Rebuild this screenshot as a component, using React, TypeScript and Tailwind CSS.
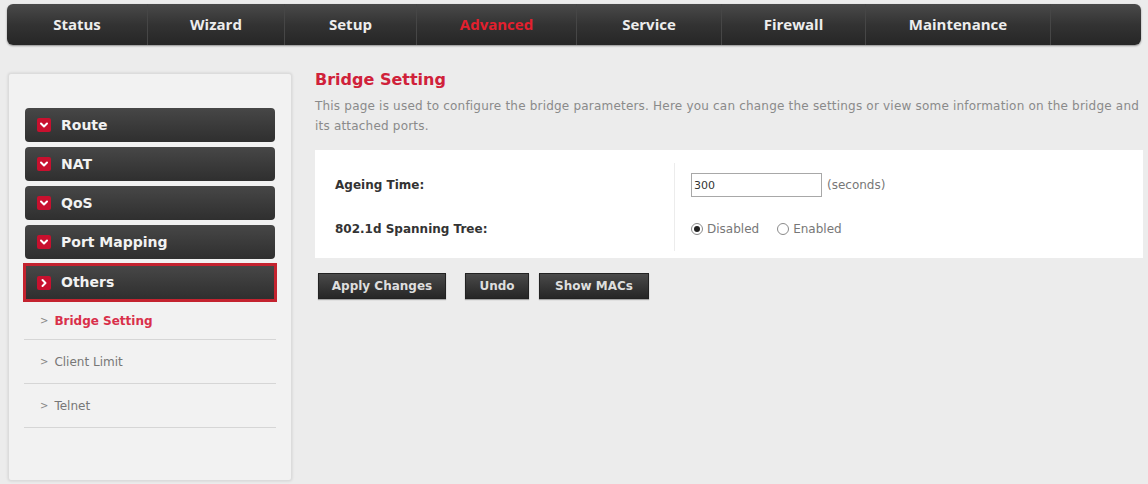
import { ChevronDown, ChevronRight } from "lucide-react";

const tabs = [
  { label: "Status", w: "w-[141px]" },
  { label: "Wizard", w: "w-[137px]" },
  { label: "Setup", w: "w-[132px]" },
  { label: "Advanced", w: "w-[160px]", active: true },
  { label: "Service", w: "w-[145px]" },
  { label: "Firewall", w: "w-[144px]" },
  { label: "Maintenance", w: "w-[185px]" },
];

const groups = ["Route", "NAT", "QoS", "Port Mapping"];
const subItems = [
  { label: "Bridge Setting", active: true },
  { label: "Client Limit" },
  { label: "Telnet" },
];

function TopNav() {
  return (
    <nav className="mx-[7px] mt-[4px] flex h-[41px] rounded-[6px] bg-gradient-to-b from-[#4a4a4a] via-[#333333] to-[#262626] shadow-[0_1px_2px_rgba(0,0,0,0.4)]">
      {tabs.map((t) => (
        <div
          key={t.label}
          className={`flex ${t.w} items-center justify-center border-r border-[#464646] font-['Open_Sans',sans-serif] text-[15px] font-bold ${
            t.active ? "text-[#e3202e]" : "text-[#ededed]"
          }`}
        >
          {t.label}
        </div>
      ))}
      <div className="flex-1" />
    </nav>
  );
}

function Sidebar() {
  return (
    <aside className="ml-[8px] flex w-[284px] flex-col rounded-[3px] border border-[#dcdcdc] bg-[#f2f2f2] px-[14px] pb-[52px] pt-[34px] shadow-[0_0_3px_rgba(0,0,0,0.12)]">
      <div className="flex flex-col gap-[5px] px-[2px]">
        {groups.map((g) => (
          <div
            key={g}
            className="flex h-[34px] items-center gap-[10px] rounded-[4px] bg-gradient-to-b from-[#474747] to-[#2f2f2f] pl-[12px] text-[14px] font-bold text-[#f2f2f2]"
          >
            <span className="flex h-[14px] w-[14px] items-center justify-center rounded-[2px] bg-[#c8102e]">
              <ChevronDown size={12} strokeWidth={4} className="text-white" />
            </span>
            {g}
          </div>
        ))}
      </div>
      <div className="mt-[4px] flex h-[39px] items-center gap-[10px] border-[3px] border-[#c4232f] bg-gradient-to-b from-[#474747] to-[#2f2f2f] pl-[11px] text-[14px] font-bold text-[#f2f2f2]">
        <span className="flex h-[14px] w-[14px] items-center justify-center rounded-[2px] bg-[#c8102e]">
          <ChevronRight size={12} strokeWidth={4} className="text-white" />
        </span>
        Others
      </div>
      <ul className="mx-[1px] flex flex-col">
        {subItems.map((s, i) => (
          <li
            key={s.label}
            className={`flex ${i === 0 ? "h-[38px]" : "h-[44px]"} items-center gap-[6px] border-b border-[#d6d6d6] pl-[16px] text-[12px] ${
              s.active ? "font-bold text-[#d9304a]" : "text-[#777]"
            }`}
          >
            <span className="text-[10px] font-normal text-[#888]">&gt;</span>
            {s.label}
          </li>
        ))}
      </ul>
    </aside>
  );
}

function Content() {
  return (
    <section className="-mt-[3px] flex flex-1 flex-col pl-[23px] pr-[5px]">
      <h1 className="text-[16px] font-bold leading-[20px] text-[#d0213a]">Bridge Setting</h1>
      <p className="mt-[6px] text-[12px] leading-[20px] tracking-[0.2px] text-[#8a8a8a]">
        This page is used to configure the bridge parameters. Here you can change the settings or view some information on the bridge and its attached ports.
      </p>
      <div className="mt-[14px] flex flex-col bg-white px-[4px] pb-[7px] pt-[13px]">
        <div className="flex h-[44px] items-center">
          <div className="flex h-full w-[356px] items-center border-r border-[#ececec] pl-[16px] text-[12px] font-bold text-[#333]">
            Ageing Time:
          </div>
          <div className="flex items-center gap-[5px] pl-[16px] text-[12px] text-[#777]">
            <input
              defaultValue="300"
              className="h-[24px] w-[131px] border border-[#a8a8a8] bg-white px-[2px] text-[11px] text-[#333] outline-none"
            />
            (seconds)
          </div>
        </div>
        <div className="flex h-[44px] items-center">
          <div className="flex h-full w-[356px] items-center border-r border-[#ececec] pl-[16px] text-[12px] font-bold text-[#333]">
            802.1d Spanning Tree:
          </div>
          <div className="flex items-center pl-[16px] text-[12px] text-[#777]">
            <label className="flex items-center gap-[4px]">
              <span className="flex h-[12px] w-[12px] items-center justify-center rounded-full border border-[#8a8a8a] bg-white">
                <span className="h-[6px] w-[6px] rounded-full bg-[#222]" />
              </span>
              Disabled
            </label>
            <label className="ml-[18px] flex items-center gap-[4px]">
              <span className="h-[12px] w-[12px] rounded-full border border-[#8a8a8a] bg-white" />
              Enabled
            </label>
          </div>
        </div>
      </div>
      <div className="mt-[15px] flex gap-[10px] pl-[3px]">
        {["Apply Changes", "Undo", "Show MACs"].map((b, i) => (
          <button
            key={b}
            className={`h-[26px] border border-[#222] bg-gradient-to-b from-[#4a4a4a] to-[#262626] text-[12px] font-bold text-[#dedede] shadow-[0_1px_1px_rgba(0,0,0,0.3)] ${
              i === 1 ? "ml-[9px] w-[64px]" : ""
            } ${i === 0 ? "w-[128px]" : ""} ${i === 2 ? "w-[110px]" : ""}`}
          >
            {b}
          </button>
        ))}
      </div>
    </section>
  );
}

export default function App() {
  return (
    <div className="flex h-[484px] w-[1148px] flex-col overflow-hidden bg-[#ececec] font-['DejaVu_Sans',Verdana,sans-serif]">
      <TopNav />
      <div className="mt-[28px] flex flex-1 items-start">
        <Sidebar />
        <Content />
      </div>
    </div>
  );
}
